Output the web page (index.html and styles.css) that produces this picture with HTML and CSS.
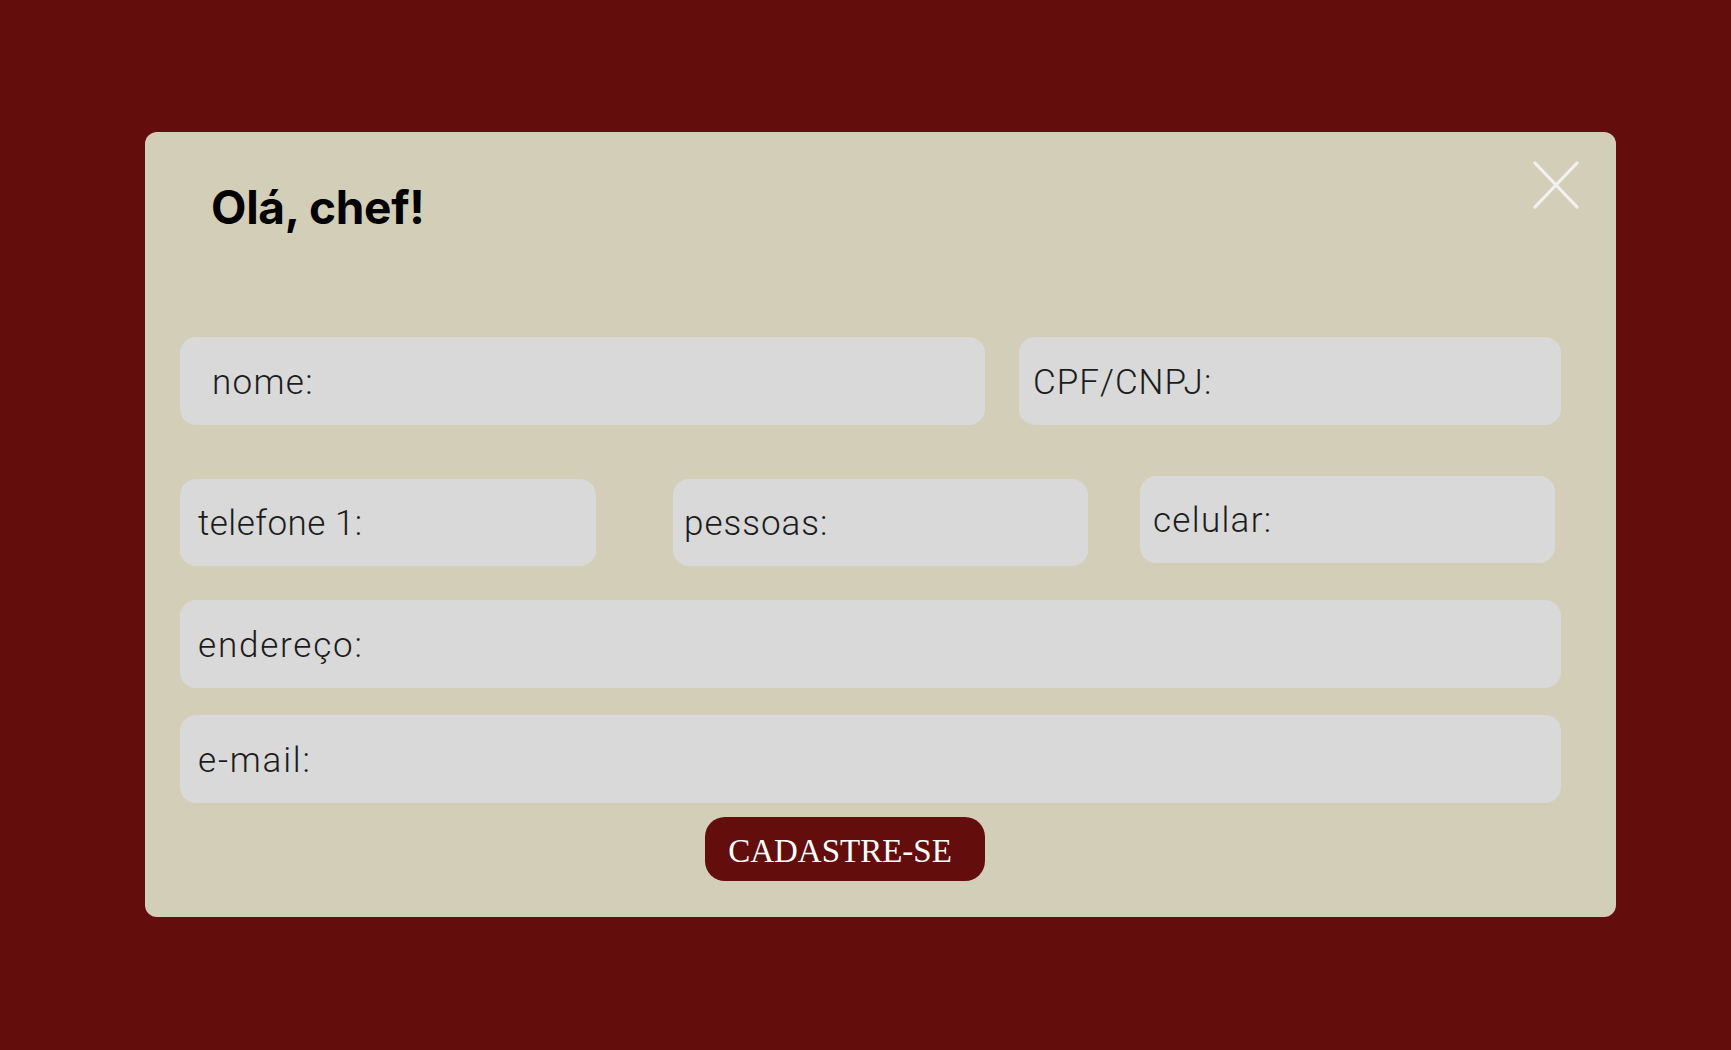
FILE: index.html
```html
<!DOCTYPE html>
<html lang="pt-BR">
<head>
<meta charset="utf-8">
<title>Cadastro</title>
<link rel="stylesheet" href="styles.css">
</head>
<body>
<div class="page">
  <div class="modal">
    <button class="close" aria-label="fechar">
      <svg width="46" height="48" viewBox="0 0 46 48"><path d="M2 2 L44 46 M44 2 L2 46" stroke="#f2f2f2" stroke-width="3.2" stroke-linecap="round" fill="none"/></svg>
    </button>
    <h1 class="title">Olá, chef!</h1>
    <div class="row row-1">
      <div class="field f-nome">nome:</div>
      <div class="field f-cpf">CPF/CNPJ:</div>
    </div>
    <div class="row row-2">
      <div class="field f-tel">telefone 1:</div>
      <div class="field f-pessoas">pessoas:</div>
      <div class="field f-cel">celular:</div>
    </div>
    <div class="field f-full f-end">endereço:</div>
    <div class="field f-full f-mail">e-mail:</div>
    <div class="actions">
      <button class="submit">CADASTRE-SE</button>
    </div>
  </div>
</div>
</body>
</html>
```

FILE: styles.css
```css
html, body {
  margin: 0;
  padding: 0;
  background: #630d0d;
}
.page {
  width: 1731px;
  height: 1050px;
  padding-top: 132px;
  padding-left: 145px;
  box-sizing: border-box;
}
.modal {
  position: relative;
  width: 1471px;
  height: 785px;
  box-sizing: border-box;
  background: #d3ceb7;
  border-radius: 12px;
  padding: 0 55px 0 35px;
  display: flex;
  flex-direction: column;
}
.close {
  position: absolute;
  top: 29px;
  right: 37px;
  padding: 0;
  border: 0;
  background: none;
  line-height: 0;
}
.title {
  margin: 47px 0 0 31px;
  font-family: "Inter", "Lato", sans-serif;
  font-weight: 700;
  font-size: 46px;
  line-height: 56px;
  color: #000;
  letter-spacing: -0.3px;
}
.row {
  display: flex;
}
.row-1 {
  margin-top: 102px;
}
.row-2 {
  margin-top: 54px;
  align-items: flex-start;
}
.field {
  height: 88px;
  box-sizing: border-box;
  background: #d9d9d9;
  border-radius: 16px;
  display: flex;
  align-items: center;
  font-family: "Roboto", sans-serif;
  font-weight: 300;
  font-size: 35px;
  letter-spacing: 1.3px;
  color: #1c1c1c;
  padding-left: 18px;
  padding-top: 2px;
}
.f-nome {
  width: 805px;
  padding-left: 32px;
}
.f-cpf {
  width: 542px;
  margin-left: 34px;
  padding-left: 14px;
  letter-spacing: 1px;
}
.row-2 .field {
  height: 87px;
}
.f-tel {
  width: 416px;
  letter-spacing: 0.5px;
}
.f-pessoas {
  width: 415px;
  margin-left: 77px;
  padding-left: 11px;
  letter-spacing: 1px;
}
.f-cel {
  width: 415px;
  margin-left: 52px;
  margin-top: -3px;
  padding-left: 13px;
}
.f-full {
  width: 1381px;
}
.f-end {
  margin-top: 34px;
  letter-spacing: 1.8px;
}
.f-mail {
  margin-top: 27px;
  letter-spacing: 1.8px;
}
.actions {
  margin-top: 14px;
  padding-left: 525px;
}
.submit {
  width: 280px;
  height: 64px;
  border: 0;
  border-radius: 20px;
  background: #630d0d;
  color: #fff;
  font-family: "Liberation Serif", serif;
  font-size: 33px;
  padding: 5px 10px 0 0;
  letter-spacing: 0;
}
```
